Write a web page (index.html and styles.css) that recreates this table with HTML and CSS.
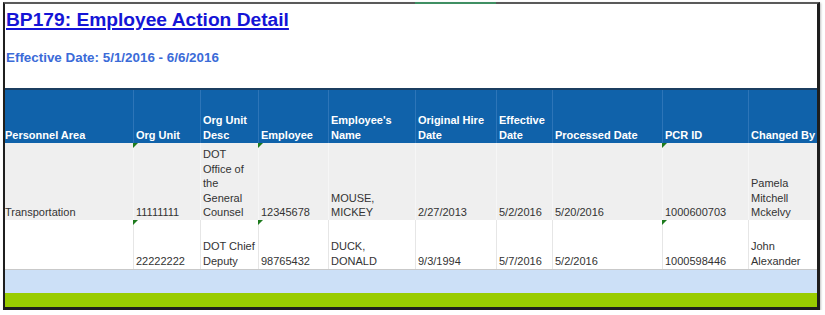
FILE: index.html
```html
<!DOCTYPE html>
<html>
<head>
<meta charset="utf-8">
<link rel="stylesheet" href="styles.css">
</head>
<body>
<div class="sheet">
  <span class="sel-mark"></span>
  <div class="top">
    <h1 class="title">BP179: Employee Action Detail</h1>
    <div class="subtitle">Effective Date: 5/1/2016 - 6/6/2016</div>
  </div>
  <div class="row head">
    <div class="cell first"><span>Personnel Area</span></div>
    <div class="cell"><span>Org Unit</span></div>
    <div class="cell"><span>Org Unit<br>Desc</span></div>
    <div class="cell"><span>Employee</span></div>
    <div class="cell"><span>Employee's<br>Name</span></div>
    <div class="cell"><span>Original Hire<br>Date</span></div>
    <div class="cell"><span>Effective<br>Date</span></div>
    <div class="cell"><span>Processed Date</span></div>
    <div class="cell"><span>PCR ID</span></div>
    <div class="cell"><span>Changed By</span></div>
  </div>
  <div class="row data alt r1">
    <div class="cell first"><span>Transportation</span></div>
    <div class="cell flag"><span>11111111</span></div>
    <div class="cell"><span>DOT<br>Office of<br>the<br>General<br>Counsel</span></div>
    <div class="cell flag"><span>12345678</span></div>
    <div class="cell"><span>MOUSE,<br>MICKEY</span></div>
    <div class="cell"><span>2/27/2013</span></div>
    <div class="cell"><span>5/2/2016</span></div>
    <div class="cell"><span>5/20/2016</span></div>
    <div class="cell flag"><span>1000600703</span></div>
    <div class="cell"><span>Pamela<br>Mitchell<br>Mckelvy</span></div>
  </div>
  <div class="row data r2">
    <div class="cell first"><span></span></div>
    <div class="cell flag"><span>22222222</span></div>
    <div class="cell"><span>DOT Chief<br>Deputy</span></div>
    <div class="cell flag"><span>98765432</span></div>
    <div class="cell"><span>DUCK,<br>DONALD</span></div>
    <div class="cell"><span>9/3/1994</span></div>
    <div class="cell"><span>5/7/2016</span></div>
    <div class="cell"><span>5/2/2016</span></div>
    <div class="cell flag"><span>1000598446</span></div>
    <div class="cell"><span>John<br>Alexander</span></div>
  </div>
  <div class="band-blue"></div>
  <div class="band-green"></div>
</div>
</body>
</html>
```

FILE: styles.css
```css
html, body {
  margin: 0;
  padding: 0;
  background: #ffffff;
}

body {
  font-family: "Liberation Sans", Arial, sans-serif;
}

.sheet {
  position: relative;
  margin: 2px 0 0 3px;
  width: 812px;
  border-style: solid;
  border-color: #1e1e1e;
  border-top-color: #5a5a5a;
  border-width: 2px 3px 3px 2px;
  box-shadow: 1px 1px 2px rgba(0, 0, 0, 0.25);
  background: #ffffff;
}

.sel-mark {
  position: absolute;
  top: -2px;
  left: 410px;
  width: 81px;
  height: 2px;
  background: #3f8f63;
}

.top {
  box-sizing: border-box;
  height: 84px;
  padding: 5px 0 0 1px;
}

.title {
  margin: 0;
  font-size: 19.2px;
  line-height: 22px;
  font-weight: bold;
  color: #1414d6;
  text-decoration: underline;
  text-decoration-thickness: 2px;
  text-underline-offset: 2px;
}

.subtitle {
  margin-top: 19px;
  font-size: 13.4px;
  line-height: 16px;
  font-weight: bold;
  color: #3b6bd8;
}

.row {
  display: grid;
  grid-template-columns: 128px 67px 58px 70px 87px 81px 56px 110px 86px 69px;
}

.cell {
  box-sizing: border-box;
  display: flex;
  align-items: flex-end;
  padding: 0 0 0 2px;
  border-left: 1px solid transparent;
  white-space: nowrap;
}

.cell.first {
  padding-left: 0;
  border-left: none;
}

.head {
  height: 55px;
  border-top: 2px solid #1b3d60;
  box-sizing: border-box;
  background: #1062aa;
  color: #ffffff;
  font-size: 11px;
  line-height: 15px;
  font-weight: bold;
}

.head .cell {
  border-left-color: #2d75b8;
}

.data {
  font-size: 11px;
  line-height: 14.6px;
  color: #333333;
}

.r1 {
  height: 77px;
  background: #efefef;
}

.r1 .cell {
  border-left-color: #f6f6f6;
}

.r2 {
  height: 50px;
  box-sizing: border-box;
  background: #ffffff;
  border-bottom: 1px solid #c9c9c9;
  line-height: 15px;
}

.r2 .cell {
  border-left-color: #e6e6e6;
}

.flag {
  position: relative;
}

.flag::before {
  content: "";
  position: absolute;
  top: 0;
  left: -1px;
  width: 0;
  height: 0;
  border-top: 5px solid #1d7a1d;
  border-right: 5px solid transparent;
}

.band-blue {
  height: 23px;
  background: #cce0f7;
}

.band-green {
  height: 14px;
  background: #99cc00;
}
```
